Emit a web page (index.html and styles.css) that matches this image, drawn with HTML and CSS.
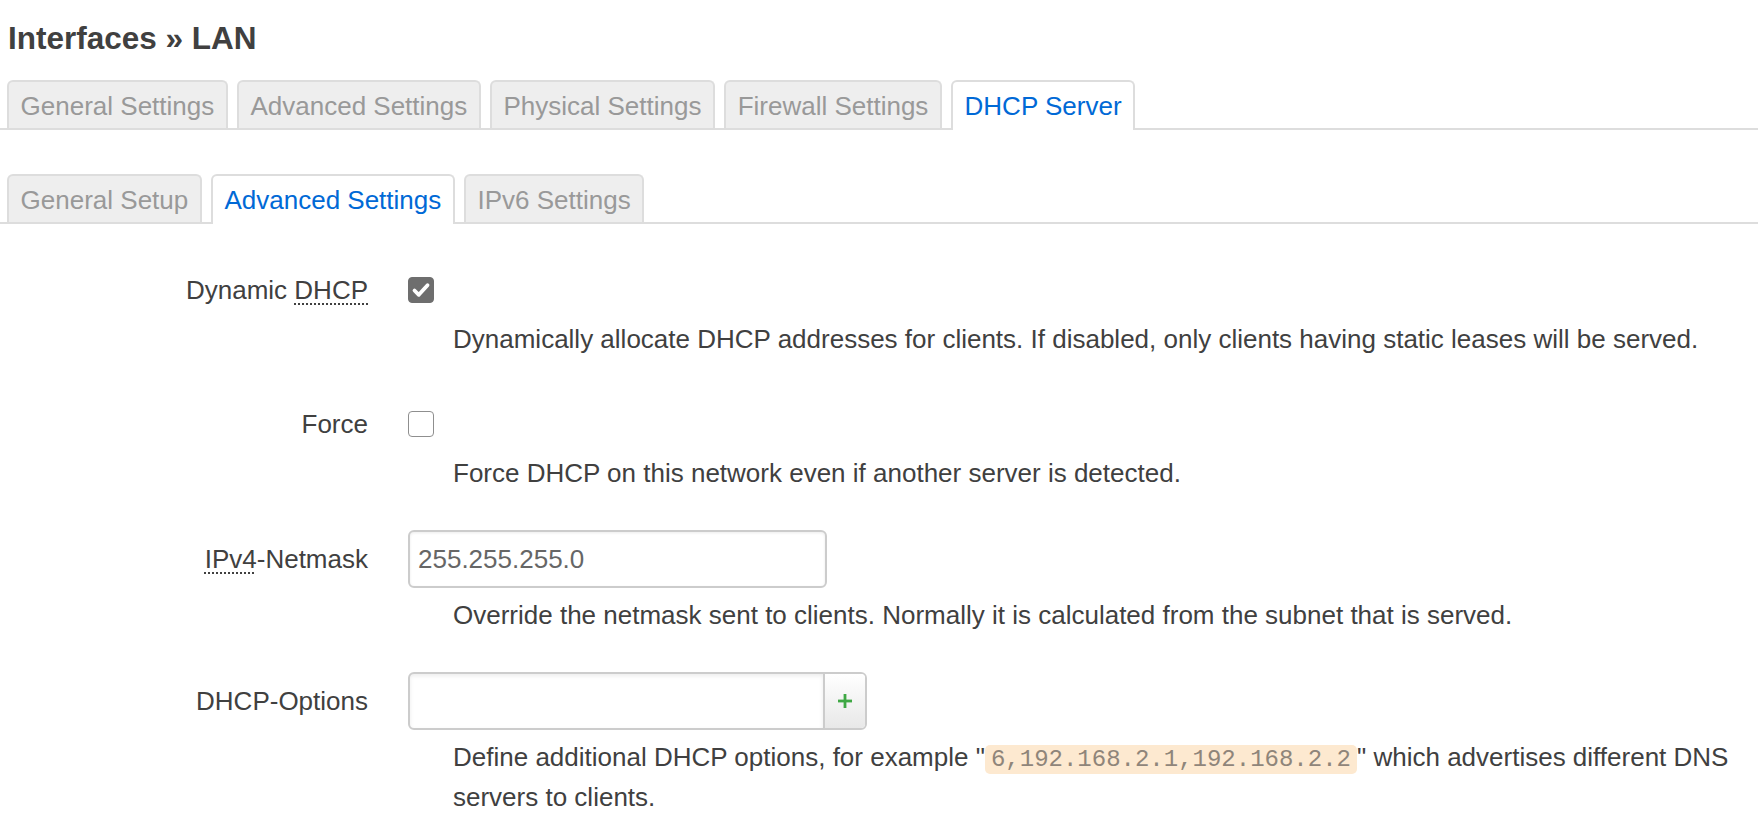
FILE: index.html
```html
<!DOCTYPE html>
<html lang="en">
<head>
<meta charset="utf-8">
<title>Interfaces » LAN</title>
<link rel="stylesheet" href="styles.css">
</head>
<body>
<h2 class="page-title">Interfaces » LAN</h2>

<ul class="tabs tabs--main">
  <li class="tab"><a>General Settings</a></li>
  <li class="tab"><a>Advanced Settings</a></li>
  <li class="tab"><a>Physical Settings</a></li>
  <li class="tab"><a>Firewall Settings</a></li>
  <li class="tab tab--active"><a>DHCP Server</a></li>
</ul>

<ul class="tabs tabs--sub">
  <li class="tab"><a>General Setup</a></li>
  <li class="tab tab--active"><a>Advanced Settings</a></li>
  <li class="tab"><a>IPv6 Settings</a></li>
</ul>

<div class="form">
  <div class="row row--check">
    <div class="label">Dynamic&nbsp;<abbr class="abbr">DHCP</abbr></div>
    <div class="field">
      <div class="control">
        <span class="checkbox checkbox--on">
          <svg width="26" height="26" viewBox="0 0 26 26"><path d="M6.5 13.5 L10.8 17.8 L19.5 8.2" fill="none" stroke="#fff" stroke-width="3.8" stroke-linecap="round" stroke-linejoin="round"/></svg>
        </span>
      </div>
      <div class="desc">Dynamically allocate DHCP addresses for clients. If disabled, only clients having static leases will be served.</div>
    </div>
  </div>

  <div class="row row--check">
    <div class="label">Force</div>
    <div class="field">
      <div class="control">
        <span class="checkbox"></span>
      </div>
      <div class="desc">Force DHCP on this network even if another server is detected.</div>
    </div>
  </div>

  <div class="row row--input">
    <div class="label"><abbr class="abbr">IPv4</abbr>-Netmask</div>
    <div class="field">
      <div class="control">
        <div class="textbox">255.255.255.0</div>
      </div>
      <div class="desc">Override the netmask sent to clients. Normally it is calculated from the subnet that is served.</div>
    </div>
  </div>

  <div class="row row--input">
    <div class="label">DHCP-Options</div>
    <div class="field">
      <div class="control">
        <div class="dynlist">
          <div class="dynlist-input"></div>
          <div class="dynlist-add">
            <svg width="16" height="16" viewBox="0 0 16 16"><rect x="6.6" y="1" width="2.8" height="14" fill="#3fa845"/><rect x="1" y="6.6" width="14" height="2.8" fill="#3fa845"/></svg>
          </div>
        </div>
      </div>
      <div class="desc">Define additional DHCP options, for example "<code class="code">6,192.168.2.1,192.168.2.2</code>" which advertises different DNS servers to clients.</div>
    </div>
  </div>
</div>
</body>
</html>
```

FILE: styles.css
```css
html, body {
  margin: 0;
  padding: 0;
  background: #fff;
}

body {
  font-family: "Liberation Sans", Arial, sans-serif;
  color: #404040;
  font-size: 26px;
}

.page-title {
  margin: 20px 0 0 0;
  padding: 0 8px;
  font-size: 31.5px;
  line-height: 36px;
  font-weight: bold;
  color: #404040;
}

.tabs {
  list-style: none;
  margin: 0;
  padding: 0 7px;
  display: flex;
  gap: 9px;
  border-bottom: 2px solid #dddddd;
}

.tabs--main {
  margin-top: 24px;
}

.tabs--sub {
  margin-top: 44px;
}

.tab a {
  display: block;
  font-size: 26px;
  line-height: 28px;
  padding: 10px 11.6px 8px 11.6px;
  border: 2px solid #dddddd;
  border-bottom: none;
  border-radius: 6px 6px 0 0;
  background: #eeeeee;
  color: #999999;
  white-space: nowrap;
}

.tab--active {
  margin-bottom: -2px;
}

.tab--active a {
  background: #ffffff;
  color: #0069d6;
  padding-bottom: 10px;
}

.form {
  padding-top: 45px;
}

.row {
  display: flex;
  align-items: flex-start;
}

.row--check + .row--check {
  margin-top: 44px;
}

.row--check + .row--input,
.row--input + .row--input {
  margin-top: 37px;
}

.label {
  flex: 0 0 368px;
  display: flex;
  align-items: center;
  justify-content: flex-end;
  white-space: nowrap;
}

.row--check .label,
.row--check .control {
  height: 42px;
}

.row--input .label,
.row--input .control {
  height: 58px;
}

.abbr {
  text-decoration: underline dotted #404040 2px;
  text-underline-offset: 5px;
}

.field {
  margin-left: 40px;
  flex: 1 1 auto;
  min-width: 0;
  padding-right: 8px;
}

.control {
  display: flex;
  align-items: center;
}

.checkbox {
  box-sizing: border-box;
  width: 26px;
  height: 26px;
  border: 1.5px solid #8f8f8f;
  border-radius: 4px;
  background: #fff;
  display: block;
}

.checkbox--on {
  background: #6e6e6e;
  border-color: #6e6e6e;
}

.checkbox svg {
  display: block;
  margin: -1.5px;
}

.desc {
  padding-left: 45px;
  margin-top: 7px;
  line-height: 40px;
}

.row--check .desc {
  margin-top: 8px;
}

.textbox {
  box-sizing: border-box;
  width: 419px;
  height: 58px;
  border: 2px solid #cccccc;
  border-radius: 6px;
  padding: 0 8px;
  display: flex;
  align-items: center;
  color: #666666;
  box-shadow: inset 0 1px 3px rgba(0,0,0,0.08);
}

.dynlist {
  box-sizing: border-box;
  display: flex;
  width: 459px;
  height: 58px;
  border: 2px solid #cccccc;
  border-radius: 6px;
  overflow: hidden;
}

.dynlist-input {
  flex: 1 1 auto;
  box-shadow: inset 0 2px 4px rgba(0,0,0,0.08);
}

.dynlist-add {
  flex: 0 0 40px;
  border-left: 2px solid #cccccc;
  background: linear-gradient(#ffffff, #e8e8e8);
  display: flex;
  align-items: center;
  justify-content: center;
}

.code {
  font-family: "Liberation Mono", "Courier New", monospace;
  font-size: 24px;
  line-height: 26px;
  background: #fde9d0;
  color: #8f857a;
  border-radius: 5px;
  padding: 1px 6px;
}
```
